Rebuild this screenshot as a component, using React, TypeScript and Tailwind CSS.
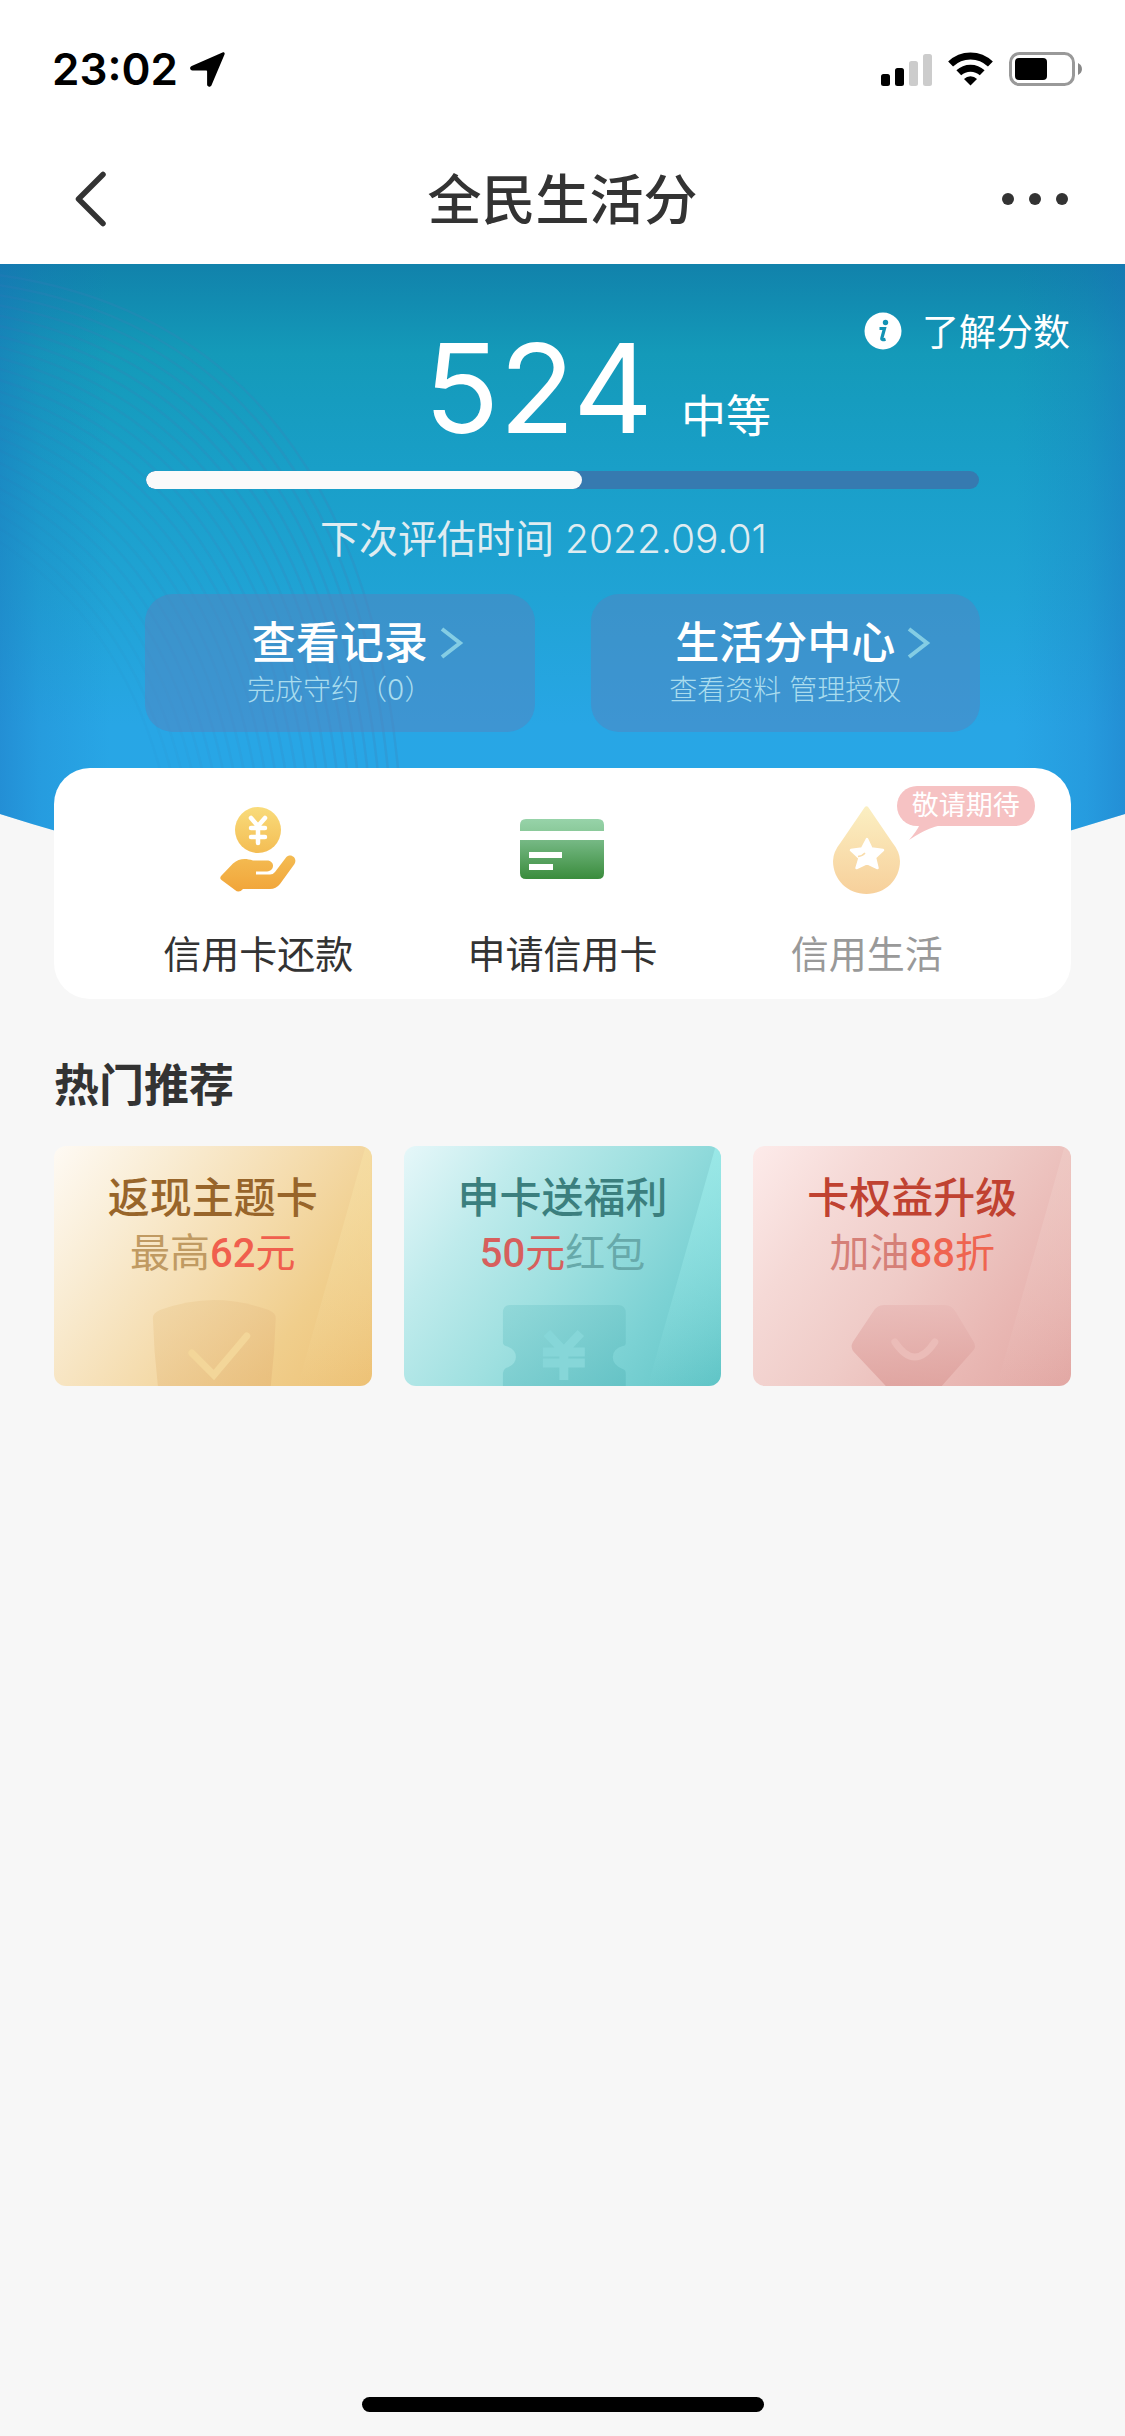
import React from 'react';

const SCORE = 524;
const MAX_SCORE = 1000;

const StatusBar: React.FC = () => (
  <div className="flex h-[134px] items-center justify-between pl-[52px] pr-[43px] pt-1">
    <div className="flex items-center gap-3">
      <span className="text-[44px] font-semibold leading-none text-black">23:02</span>
      <svg className="h-[35px] w-[35px]" viewBox="0 0 35 35" fill="#000">
        <path d="M32.500.4c1.600-.6 2.600.5 2 2.100L21.500 33.200c-1 2.300-4.400 1.800-4.400-.7V19.500c0-.7-.4-1.100-1.100-1.100H2.500c-2.700 0-3.300-3.300-.8-4.400z" />
      </svg>
    </div>
    <div className="flex items-center gap-4">
      <svg className="h-[33px] w-[51px]" viewBox="0 0 51 33">
        <rect x="0" y="21" width="9" height="12" rx="2.500" fill="#000" />
        <rect x="14" y="15" width="9" height="18" rx="2.500" fill="#000" />
        <rect x="28" y="8" width="9" height="25" rx="2.500" fill="#ccc" />
        <rect x="42" y="1" width="9" height="32" rx="2.500" fill="#ccc" />
      </svg>
      <svg className="h-[34px] w-[45px]" viewBox="0 0 45 34" fill="none" stroke="#000" strokeWidth="7">
        <path d="M2.600 12a28.500 28.500 0 0 1 39.800 0" />
        <path d="M10.800 20.800a17 17 0 0 1 23.400 0" />
        <path d="M22.500 33.500l-6.500-6.600a9.300 9.300 0 0 1 13 0z" fill="#000" stroke="none" />
      </svg>
      <svg className="h-[34px] w-[73px]" viewBox="0 0 73 34">
        <rect x="1.500" y="1.500" width="63" height="31" rx="9" fill="none" stroke="#999" strokeWidth="3" />
        <rect x="6" y="6" width="32" height="22" rx="4" fill="#000" />
        <path d="M69 11c5.300 2.500 5.300 9.500 0 12z" fill="#888" />
      </svg>
    </div>
  </div>
);

const NavBar: React.FC = () => (
  <header className="grid h-[130px] grid-cols-[1fr_auto_1fr] items-center px-[54px] text-[#333]">
    <button aria-label="返回" className="justify-self-start px-5">
      <svg className="h-[56px] w-[34px]" viewBox="0 0 34 56" fill="none" stroke="#333" strokeWidth="5.500" strokeLinecap="round" strokeLinejoin="round">
        <path d="M29 3.500L4.500 28 29 52.500" />
      </svg>
    </button>
    <h1 className="pt-[3px] text-[54px] font-medium leading-none">全民生活分</h1>
    <button aria-label="更多" className="flex gap-[15px] justify-self-end pr-[3px]">
      <span className="h-3 w-3 rounded-full bg-[#333]" />
      <span className="h-3 w-3 rounded-full bg-[#333]" />
      <span className="h-3 w-3 rounded-full bg-[#333]" />
    </button>
  </header>
);

const HeroBackground: React.FC = () => (
  <svg className="absolute inset-x-0 top-0 h-[640px] w-full" viewBox="0 0 1125 640" preserveAspectRatio="none">
    <defs>
      <linearGradient id="sky" x1="0" y1="0" x2="0" y2="1">
        <stop offset="0" stopColor="#1182ab" />
        <stop offset="0.06" stopColor="#128cb1" />
        <stop offset="0.14" stopColor="#149ab9" />
        <stop offset="0.32" stopColor="#199fc8" />
        <stop offset="0.52" stopColor="#20a3d5" />
        <stop offset="0.72" stopColor="#28a6e5" />
        <stop offset="1" stopColor="#28a6e8" />
      </linearGradient>
      <linearGradient id="edge-left" x1="0" y1="0" x2="1" y2="0">
        <stop offset="0" stopColor="#1c6cbc" stopOpacity="0.4" />
        <stop offset="0.35" stopColor="#1c6cbc" stopOpacity="0.18" />
        <stop offset="1" stopColor="#1c6cbc" stopOpacity="0" />
      </linearGradient>
      <linearGradient id="edge-right" x1="1" y1="0" x2="0" y2="0">
        <stop offset="0" stopColor="#1c6cbc" stopOpacity="0.4" />
        <stop offset="0.35" stopColor="#1c6cbc" stopOpacity="0.18" />
        <stop offset="1" stopColor="#1c6cbc" stopOpacity="0" />
      </linearGradient>
      <clipPath id="hero-shape">
        <path d="M0 0H1125V550Q562 730 0 550Z" />
      </clipPath>
    </defs>
    <g clipPath="url(#hero-shape)">
      <rect width="1125" height="640" fill="url(#sky)" />
      <g fill="none" stroke="#3f7fb5" strokeWidth="2.500">
        {Array.from({ length: 24 }, (_, i) => (
          <path
            key={i}
            strokeOpacity={0.26 - i * 0.009}
            d={`M${-10 - i * 6} ${10 + i * 9}C${230 - i * 11} ${40 + i * 9} ${385 - i * 11} ${210 + i * 5} ${402 - i * 10} 560`}
          />
        ))}
      </g>
      <rect width="110" height="640" fill="url(#edge-left)" />
      <rect x="1015" width="110" height="640" fill="url(#edge-right)" />
    </g>
  </svg>
);

interface HeroButtonProps {
  title: string;
  subtitle: string;
}

const HeroButton: React.FC<HeroButtonProps> = ({ title, subtitle }) => (
  <button className="flex h-[138px] flex-col items-center rounded-[28px] bg-[#5484bf]/50 pt-[22px]">
    <span className="grid w-full grid-cols-[1fr_auto_1fr] items-center gap-3">
      <span />
      <span className="text-[44px] font-medium leading-[54px] text-white">{title}</span>
      <svg className="h-8 w-6" viewBox="0 0 24 32" fill="none" stroke="#84cde4" strokeWidth="4">
        <path d="M2 2l18 14L2 30" />
      </svg>
    </span>
    <span className="text-[28px] font-light leading-10 text-[#a9dcee]">{subtitle}</span>
  </button>
);

const Hero: React.FC = () => (
  <section className="relative flex flex-col pt-12">
    <a href="#about-score" className="flex items-start gap-5 self-end pr-[55px] text-white">
      <svg className="h-[38px] w-[38px]" viewBox="0 0 38 38">
        <circle cx="19" cy="19" r="18.500" fill="#fff" />
        <circle cx="21.500" cy="10.500" r="2.700" fill="#1493b4" />
        <path d="M15.500 16.500h5l-2.600 9.500q-.7 2.500 3.600 1.200" fill="none" stroke="#1493b4" strokeWidth="3.200" />
      </svg>
      <span className="text-[37px] leading-[42px]">了解分数</span>
    </a>
    <div className="-mt-7 flex items-baseline justify-center gap-7 pl-[70px] text-white">
      <span className="text-[124px] leading-[124px]">{SCORE}</span>
      <span className="text-[45px] leading-none">中等</span>
    </div>
    <div
      role="progressbar"
      aria-label="生活分"
      aria-valuenow={SCORE}
      aria-valuemax={MAX_SCORE}
      className="mx-[146px] mt-[21px] h-[18px] overflow-hidden rounded-full bg-[#367ab0]"
    >
      <div className="h-full rounded-full bg-[#fafafa]" style={{ width: `${(SCORE / MAX_SCORE) * 100}%` }} />
    </div>
    <p className="mt-[22px] pr-[38px] text-center text-[39px] leading-[56px] text-[#dfecf1]">
      下次评估时间 <span className="font-light">2022.09.01</span>
    </p>
    <div className="mx-[145px] mb-9 mt-[27px] grid grid-cols-2 gap-14">
      <HeroButton title="查看记录" subtitle="完成守约（0）" />
      <HeroButton title="生活分中心" subtitle="查看资料 管理授权" />
    </div>
  </section>
);

const RepayIcon: React.FC = () => (
  <svg className="h-[88px] w-[76px]" viewBox="0 0 76 88">
    <defs>
      <linearGradient id="gold" gradientUnits="userSpaceOnUse" x1="0" y1="0" x2="0" y2="88">
        <stop offset="0" stopColor="#f9dc7c" />
        <stop offset="0.5" stopColor="#f4bf56" />
        <stop offset="1" stopColor="#f1a338" />
      </linearGradient>
    </defs>
    <circle cx="38" cy="24" r="23" fill="url(#gold)" />
    <path d="M31 12l7 8 7-8M31 22h14M31 31h14M38 20v17" fill="none" stroke="#fff" strokeWidth="4.500" strokeLinecap="round" strokeLinejoin="round" />
    <path
      fill="url(#gold)"
      d="M1.500 69.500L13 57.500C19 52.500 25 52 33 54.500H47C55 54.500 55 65 47 65.500H36V68.500H50Q53 68.500 55 66L66 51.500C70.500 46.500 78 52 74.500 58L60 78Q56 83 50 83H23Q19 87.500 15 84L1.500 74Q-1 72 1.500 69.500Z"
    />
  </svg>
);

const CardIcon: React.FC = () => (
  <svg className="h-[88px] w-[84px]" viewBox="0 0 84 88">
    <defs>
      <linearGradient id="green-top" x1="0" y1="0" x2="0" y2="1">
        <stop offset="0" stopColor="#97d3a9" />
        <stop offset="1" stopColor="#8bca9b" />
      </linearGradient>
      <linearGradient id="green-body" x1="0" y1="0" x2="0" y2="1">
        <stop offset="0" stopColor="#76b985" />
        <stop offset="1" stopColor="#3a8c3c" />
      </linearGradient>
    </defs>
    <path d="M0 25V19Q0 13 6 13H78Q84 13 84 19V25Z" fill="url(#green-top)" />
    <path d="M0 34H84V67Q84 73 78 73H6Q0 73 0 67Z" fill="url(#green-body)" />
    <path d="M9 46h33v6H9zM9 58h24v6H9z" fill="#fff" />
  </svg>
);

const LifeIcon: React.FC = () => (
  <svg className="h-[88px] w-[67px]" viewBox="0 0 67 88">
    <defs>
      <linearGradient id="drop" x1="0" y1="0" x2="0" y2="1">
        <stop offset="0" stopColor="#fbefc2" />
        <stop offset="1" stopColor="#f7d09b" />
      </linearGradient>
    </defs>
    <path d="M31.500 1.500Q33.500-1 35.500 1.500Q46 17 59 36Q67 46 67 55C67 74 52 88 33.500 88S0 74 0 55Q0 46 8 36Q21 17 31.500 1.500Z" fill="url(#drop)" />
    <path
      d="M34 33l4.500 9.500 11.500 1.500-8 7.500 2.500 10.500L34 57 23.500 62l3-10L18 44l11-1.500z"
      fill="#fff"
      stroke="#fff"
      strokeWidth="2.500"
      strokeLinejoin="round"
    />
    <path d="M25 50.500q4.500-.5 7-3.500" fill="none" stroke="#f9dcab" strokeWidth="1.500" />
  </svg>
);

const QuickActions: React.FC = () => (
  <nav className="relative mx-[54px] grid h-[231px] grid-cols-3 rounded-[36px] bg-white px-[52px] pt-[38px] text-[38px] leading-[56px] text-[#333]">
    <a href="#repay" className="flex flex-col items-center gap-8">
      <RepayIcon />
      信用卡还款
    </a>
    <a href="#apply" className="flex flex-col items-center gap-8">
      <CardIcon />
      申请信用卡
    </a>
    <a href="#life" className="relative flex flex-col items-center gap-8 text-[#999]">
      <LifeIcon />
      信用生活
      <span className="absolute -top-5 left-[182px] h-10 w-[138px] rounded-full bg-[#f6c2c3] text-center text-[27px] leading-10 text-white">
        敬请期待
        <svg className="absolute left-3 top-[38px] h-4 w-10" viewBox="0 0 40 16" fill="#f6c2c3">
          <path d="M11 0H40Q22 1 0 16Q8 7 11 0Z" />
        </svg>
      </span>
    </a>
  </nav>
);

const ShieldArt: React.FC = () => (
  <>
    <defs>
      <linearGradient id="shield" x1="0" y1="0" x2="1" y2="1">
        <stop offset="0" stopColor="#efd3a0" />
        <stop offset="1" stopColor="#e6b877" />
      </linearGradient>
    </defs>
    <path d="M99 172Q99 167 106 164Q134 154 160 154Q187 154 215 164Q222 167 222 172Q221 206 217 240H104Q100 206 99 172Z" fill="url(#shield)" fillOpacity="0.65" />
    <path d="M138 207l22 22 33-39" fill="none" stroke="#f3d699" strokeWidth="7" strokeLinecap="round" />
  </>
);

const TicketArt: React.FC = () => (
  <>
    <defs>
      <linearGradient id="ticket" x1="0" y1="0" x2="1" y2="1">
        <stop offset="0" stopColor="#8bd5d6" />
        <stop offset="1" stopColor="#60bfc2" />
      </linearGradient>
    </defs>
    <path d="M106 159H214Q222 159 222 167V197Q222 200 219 200Q209 203 209 211T219 223Q222 224 222 227V240H99V227Q99 224 102 222Q112 219 112 211T102 200Q99 199 99 196V167Q99 159 106 159Z" fill="url(#ticket)" fillOpacity="0.75" />
    <path d="M143 187l17 18 17-18M139 206h42M139 217h42M160 205v29" fill="none" stroke="#86d6d8" strokeWidth="9" />
  </>
);

const GemArt: React.FC = () => (
  <>
    <defs>
      <linearGradient id="gem" x1="0" y1="0" x2="0" y2="1">
        <stop offset="0" stopColor="#e9bab7" />
        <stop offset="1" stopColor="#dd9f9b" />
      </linearGradient>
    </defs>
    <path d="M131 159H192Q199 159 203 166L221 196Q224 201 220 205L189 240H133L101 206Q97 201 100 196L120 166Q124 159 131 159Z" fill="url(#gem)" fillOpacity="0.8" />
    <path d="M142 196q20 30 40 0" fill="none" stroke="#ebbcb8" strokeWidth="7" strokeLinecap="round" />
  </>
);

interface PromoCardProps {
  title: string;
  className: string;
  subtitleClassName: string;
  shine: string;
  art: React.ReactNode;
  children: React.ReactNode;
}

const PromoCard: React.FC<PromoCardProps> = ({ title, className, subtitleClassName, shine, art, children }) => (
  <a href="#promo" className={`relative h-[240px] overflow-hidden rounded-xl pt-6 text-center ${className}`}>
    <svg className="absolute inset-0 h-full w-full" viewBox="0 0 318 240" preserveAspectRatio="none">
      <defs>
        <linearGradient id={`shine-${title}`} x1="0" y1="0" x2="0" y2="1">
          <stop offset="0" stopColor={shine} stopOpacity="0.7" />
          <stop offset="1" stopColor={shine} stopOpacity="0" />
        </linearGradient>
      </defs>
      <path d="M312 0H318V240H244Z" fill={`url(#shine-${title})`} />
      {art}
    </svg>
    <h3 className="relative text-[42px] font-medium leading-[56px]">{title}</h3>
    <p className={`relative text-[40px] leading-[54px] ${subtitleClassName}`}>{children}</p>
  </a>
);

const Amount: React.FC<{ className: string; value: string; unit: string }> = ({ className, value, unit }) => (
  <span className={className}>
    <span className="font-['Roboto',sans-serif] font-medium">{value}</span>
    {unit}
  </span>
);

const Recommendations: React.FC = () => (
  <section className="px-[54px] pt-[59px]">
    <h2 className="text-[45px] font-bold leading-[56px] text-[#333]">热门推荐</h2>
    <div className="mt-8 grid grid-cols-3 gap-8">
      <PromoCard
        title="返现主题卡"
        className="bg-linear-[127deg,#fefaf4_0%,#f9ecd3_25%,#f5ddb0_50%,#f0ce8c_75%,#edc175_100%] text-[#98652a]"
        subtitleClassName="text-[#c09a62]"
        shine="#f6dfa4"
        art={<ShieldArt />}
      >
        最高
        <Amount className="text-[#f05f4e]" value="62" unit="元" />
      </PromoCard>
      <PromoCard
        title="申卡送福利"
        className="bg-linear-[127deg,#e6f7f9_0%,#bfebec_25%,#9fe0e0_50%,#7cd2d4_75%,#5fc4c6_100%] text-[#3b7f7e]"
        subtitleClassName="text-[#67a9aa]"
        shine="#9feeec"
        art={<TicketArt />}
      >
        <Amount className="text-[#d75f5d]" value="50" unit="元" />
        红包
      </PromoCard>
      <PromoCard
        title="卡权益升级"
        className="bg-linear-[127deg,#fdebea_0%,#f5d9d6_25%,#efcbc7_50%,#e9b8b4_75%,#e2a7a3_100%] text-[#c04231]"
        subtitleClassName="text-[#d58078]"
        shine="#efcbc6"
        art={<GemArt />}
      >
        加油
        <Amount className="text-[#ef6450]" value="88" unit="折" />
      </PromoCard>
    </div>
  </section>
);

const App: React.FC = () => {
  return (
    <div className="flex min-h-screen flex-col bg-[#f7f7f7] font-['Inter','Noto_Sans_CJK_SC',sans-serif]">
      <div className="bg-white">
        <StatusBar />
        <NavBar />
      </div>
      <main className="relative">
        <HeroBackground />
        <Hero />
        <QuickActions />
        <Recommendations />
      </main>
      {/* Home indicator */}
      <div className="mx-auto mb-6 mt-auto h-[15px] w-[402px] rounded-full bg-black" />
    </div>
  );
};

export default App;
